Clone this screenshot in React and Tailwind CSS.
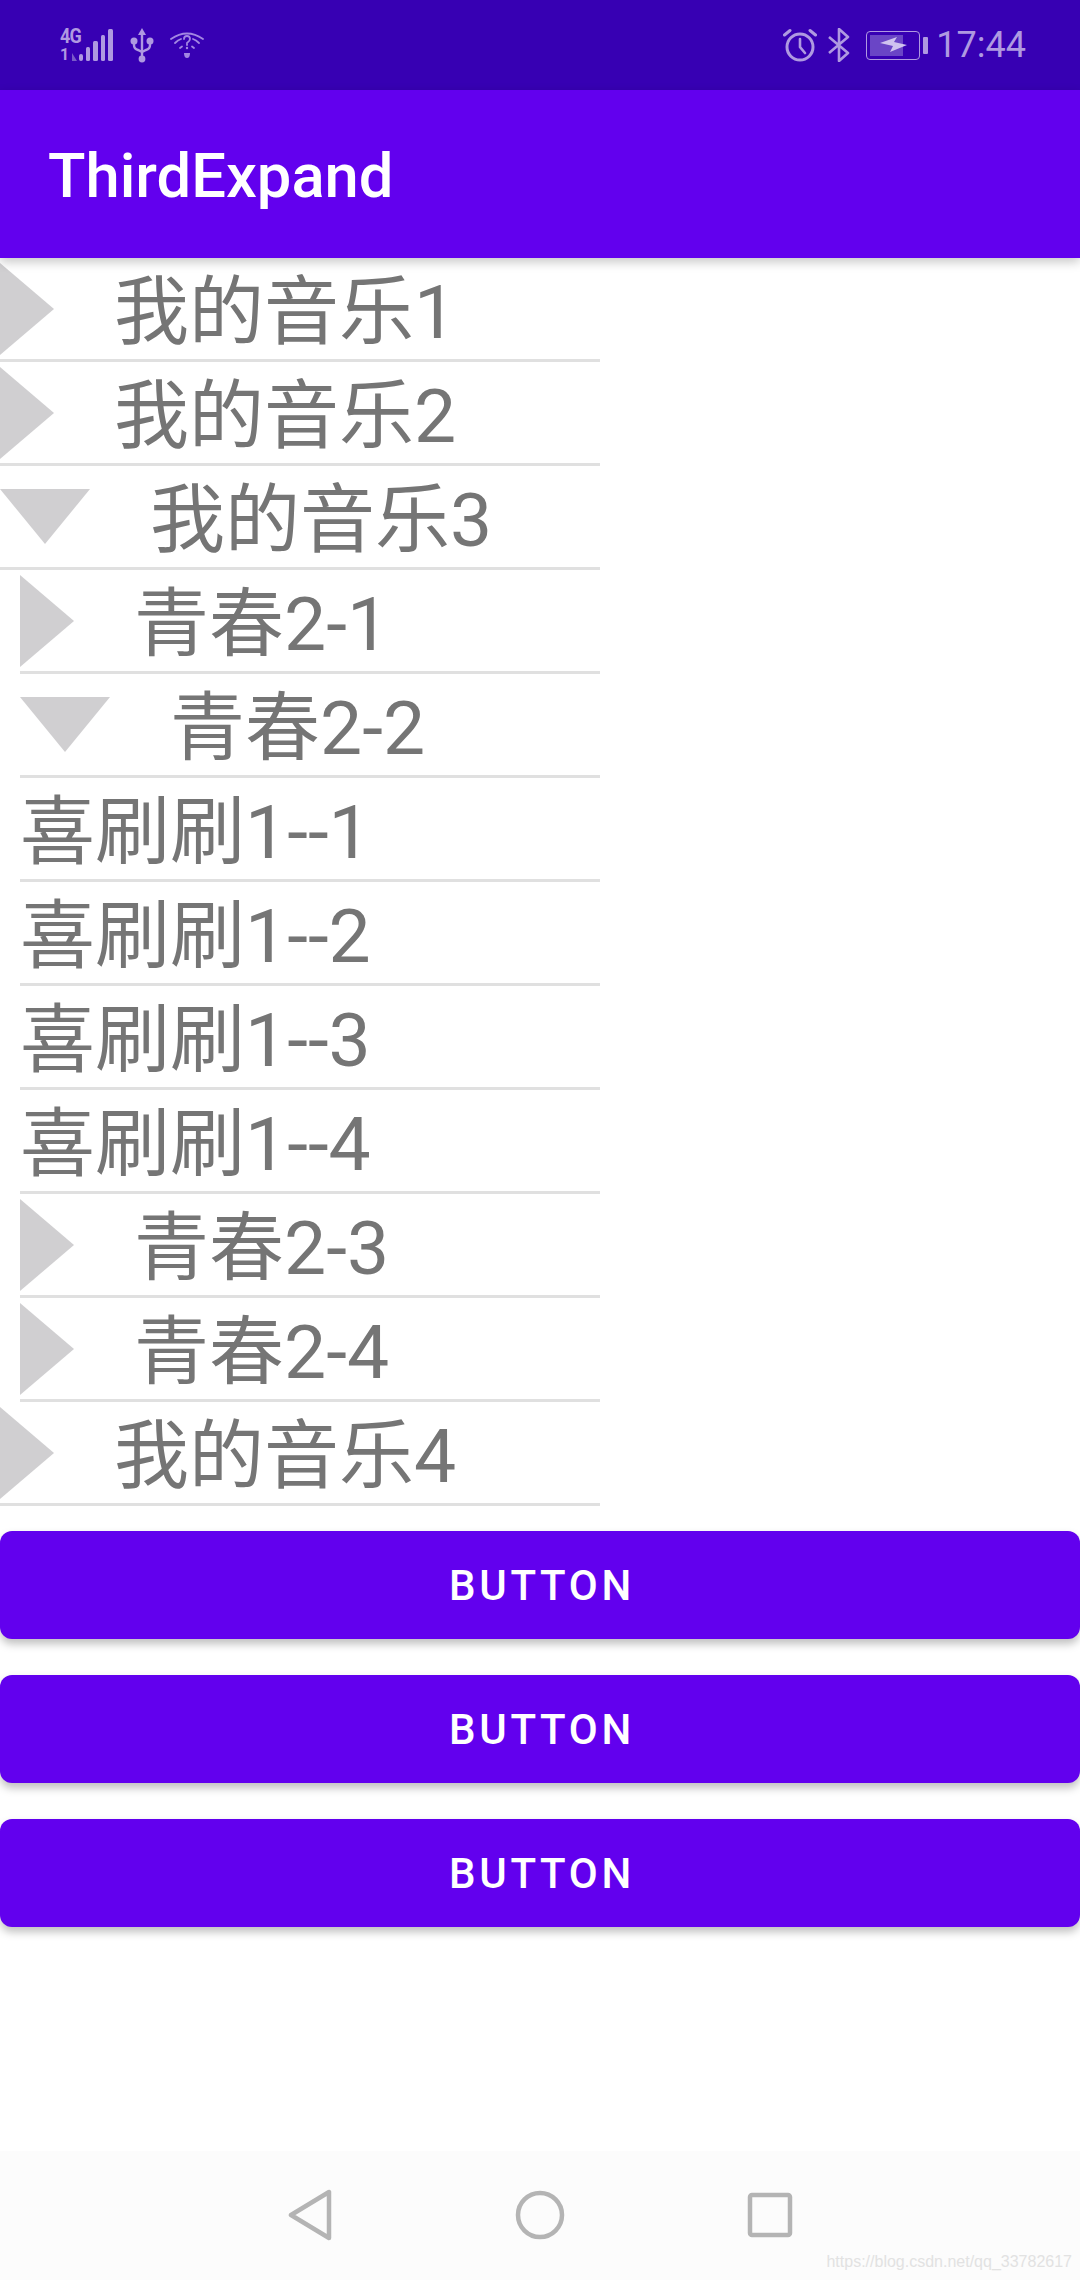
import React from 'react';

const rows = [
    { type: 'closed', level: 0, label: '我的音乐1' },
    { type: 'closed', level: 0, label: '我的音乐2' },
    { type: 'open', level: 0, label: '我的音乐3' },
    { type: 'closed', level: 1, label: '青春2-1' },
    { type: 'open', level: 1, label: '青春2-2' },
    { type: 'leaf', level: 1, label: '喜刷刷1--1' },
    { type: 'leaf', level: 1, label: '喜刷刷1--2' },
    { type: 'leaf', level: 1, label: '喜刷刷1--3' },
    { type: 'leaf', level: 1, label: '喜刷刷1--4' },
    { type: 'closed', level: 1, label: '青春2-3' },
    { type: 'closed', level: 1, label: '青春2-4' },
    { type: 'closed', level: 0, label: '我的音乐4' },
];

const SignalIcon = () => (
    <div className="relative w-[54px] h-[34px] font-['Roboto',sans-serif] font-bold text-[#af99e1]">
        <span className="absolute left-0 top-[-2px] text-[20px] leading-[20px] tracking-[-1px] scale-x-90 origin-left">4G</span>
        <span className="absolute left-0 top-[19px] text-[16px] leading-[16px]">1</span>
        <svg width="54" height="34" viewBox="0 0 54 34" className="absolute left-0 top-0">
            <path d="M12 33 L12 25 L17 33 Z" fill="#7a5bc8" />
            <rect x="19" y="26" width="4" height="7" rx="2" fill="#af99e1" />
            <rect x="26" y="19" width="4" height="14" rx="1.5" fill="#af99e1" />
            <rect x="33" y="13" width="5" height="20" rx="1.5" fill="#af99e1" />
            <rect x="41" y="7" width="4" height="26" rx="1.5" fill="#af99e1" />
            <rect x="48" y="1" width="5" height="32" rx="1.5" fill="#af99e1" />
        </svg>
    </div>
);

const UsbIcon = () => (
    <svg width="24" height="35" viewBox="0 0 24 35" fill="none" stroke="#af99e1" strokeWidth="2.4">
        <path d="M12 4 V31" />
        <path d="M12 0 L16 7 H8 Z" fill="#af99e1" stroke="none" />
        <circle cx="12" cy="31" r="3.4" fill="#af99e1" stroke="none" />
        <path d="M4 13 V17 Q4 21 8 22 L12 24" />
        <path d="M20 13 V17 Q20 21 16 22 L12 24" />
        <circle cx="4" cy="13" r="3.5" fill="#af99e1" stroke="none" />
        <circle cx="20" cy="13" r="3.5" fill="#af99e1" stroke="none" />
    </svg>
);

const WifiIcon = () => (
    <svg width="34" height="28" viewBox="0 0 34 28" fill="none" stroke="#a387e2" strokeWidth="1.8" strokeLinecap="round">
        <path d="M1 8 Q17 -3 33 8" />
        <path d="M5 12 Q8 9 11 8" />
        <path d="M23 8 Q26 9 29 12" />
        <path d="M10 17 L12 15.5" />
        <path d="M24 17 L22 15.5" />
        <path d="M14 8 Q14 5 17 5 Q20 5 20 8 Q20 10 17 12 V14" />
        <circle cx="17" cy="17" r="1.2" fill="#a387e2" stroke="none" />
        <path d="M14 22 H20 Q20 27 17 27 Q14 27 14 22 Z" fill="#a387e2" stroke="none" />
    </svg>
);

const AlarmIcon = () => (
    <svg width="34" height="34" viewBox="0 0 34 34" fill="none" stroke="#af99e1" strokeWidth="3" strokeLinecap="round">
        <circle cx="17" cy="19" r="13" />
        <path d="M17 11 V19 L22 25" strokeWidth="2.6" />
        <path d="M1.5 7 L7 2.5" />
        <path d="M32.5 7 L27 2.5" />
    </svg>
);

const BluetoothIcon = () => (
    <svg width="22" height="34" viewBox="0 0 22 34" fill="none" stroke="#af99e1" strokeWidth="2.6" strokeLinejoin="round">
        <path d="M1 9 L20 25 L11 33 V1 L20 9 L1 25" />
    </svg>
);

const BatteryIcon = () => (
    <div className="flex items-center gap-[3px]">
        <div className="relative w-[54px] h-[29px] rounded-[4px] border-[1.5px] border-[#af99e1] p-[3px]">
            <div className="w-[33px] h-full bg-[#6a45c6]" />
            <svg width="27" height="15" viewBox="0 0 27 15" className="absolute left-[13px] top-[5px]">
                <path d="M0 6 L17 0 L14 5 L27 8 L10 15 L13 9 Z" fill="#cfc2ef" />
            </svg>
        </div>
        <div className="w-[5px] h-[17px] rounded-[1px] bg-[#af99e1]" />
    </div>
);

const StatusBar = () => (
    <div className="h-[90px] shrink-0 bg-[#3700b3] flex items-center justify-between pl-[60px] pr-[54px]">
        <div className="flex items-center">
            <SignalIcon />
            <div className="ml-[16px]"><UsbIcon /></div>
            <div className="ml-[16px]"><WifiIcon /></div>
        </div>
        <div className="flex items-center">
            <AlarmIcon />
            <div className="ml-[11px]"><BluetoothIcon /></div>
            <div className="ml-[16px]"><BatteryIcon /></div>
            <span className="ml-[8px] text-[36px] leading-[40px] text-[#af99e1] font-['Roboto',sans-serif]">17:44</span>
        </div>
    </div>
);

const Arrow = ({ open }) =>
    open ? (
        <svg width="90" height="55" viewBox="0 0 90 55" className="shrink-0">
            <path d="M0 0 H90 L45 55 Z" fill="#d0cfd1" />
        </svg>
    ) : (
        <svg width="54" height="92" viewBox="0 0 54 92" className="shrink-0">
            <path d="M0 0 L54 46 L0 92 Z" fill="#d0cfd1" />
        </svg>
    );

const Row = ({ row }) => (
    <div className={`h-[104px] ${row.level === 1 ? 'pl-[20px]' : ''}`}>
        <div className="h-full flex items-center border-b-[3px] border-[#e0e0e0]">
            {row.type !== 'leaf' && <Arrow open={row.type === 'open'} />}
            <span className={`pt-[8px] text-[75px] leading-none text-[#757575] whitespace-nowrap ${row.type === 'leaf' ? 'ml-0' : 'ml-[60px]'}`}>
                {row.label}
            </span>
        </div>
    </div>
);

const NavBar = () => (
    <div className="mt-auto h-[129px] bg-[#fcfcfc] relative flex items-center justify-center">
        <div className="flex items-center gap-[182px] pb-[1px]">
            <svg width="46" height="52" viewBox="0 0 46 52" fill="none" stroke="#b4b4b4" strokeWidth="4.5" strokeLinejoin="round">
                <path d="M42 3 V49 L4 26 Z" />
            </svg>
            <svg width="50" height="50" viewBox="0 0 50 50" fill="none" stroke="#b4b4b4" strokeWidth="4.5">
                <circle cx="25" cy="25" r="22" />
            </svg>
            <svg width="46" height="46" viewBox="0 0 46 46" fill="none" stroke="#b4b4b4" strokeWidth="4.5" strokeLinejoin="round">
                <rect x="3" y="3" width="40" height="40" rx="2" />
            </svg>
        </div>
        <span className="absolute right-[8px] bottom-[8px] text-[16px] leading-[20px] text-[#e2e2e2] font-['Liberation_Sans',sans-serif]">
            https://blog.csdn.net/qq_33782617
        </span>
    </div>
);

export default function App() {
    return (
        <div className="w-[1080px] h-[2280px] bg-white flex flex-col overflow-hidden font-['Roboto','Noto_Sans_CJK_SC',sans-serif]">
            <StatusBar />
            <div className="relative h-[168px] shrink-0 bg-[#6200ee] flex items-center pl-[48px] pt-[4px] shadow-[0_4px_10px_rgba(0,0,0,0.22)]">
                <span className="text-[61.5px] font-medium text-white">ThirdExpand</span>
            </div>
            <div className="w-[600px]">
                {rows.map((row) => (
                    <Row key={row.label} row={row} />
                ))}
            </div>
            <div className="flex flex-col gap-[36px] mt-[25px]">
                {[1, 2, 3].map((n) => (
                    <button
                        key={n}
                        className="w-full h-[108px] rounded-[12px] bg-[#6200ee] text-white text-[42px] font-medium tracking-[3.75px] pl-[4px] pt-[1px] shadow-[0_5px_8px_rgba(0,0,0,0.25)]"
                    >
                        BUTTON
                    </button>
                ))}
            </div>
            <NavBar />
        </div>
    );
}
